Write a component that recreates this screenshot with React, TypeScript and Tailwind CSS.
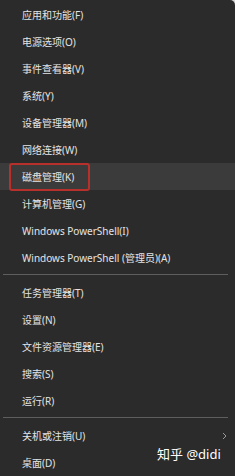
import React from 'react';

type Item = { label: string; active?: boolean; submenu?: boolean } | 'sep';

const items: Item[] = [
  { label: '应用和功能(F)' },
  { label: '电源选项(O)' },
  { label: '事件查看器(V)' },
  { label: '系统(Y)' },
  { label: '设备管理器(M)' },
  { label: '网络连接(W)' },
  { label: '磁盘管理(K)', active: true },
  { label: '计算机管理(G)' },
  { label: 'Windows PowerShell(I)' },
  { label: 'Windows PowerShell (管理员)(A)' },
  'sep',
  { label: '任务管理器(T)' },
  { label: '设置(N)' },
  { label: '文件资源管理器(E)' },
  { label: '搜索(S)' },
  { label: '运行(R)' },
  'sep',
  { label: '关机或注销(U)', submenu: true },
  { label: '桌面(D)' },
];

const App: React.FC = () => {
  return (
    <div className="w-[235px] h-[476px] bg-[#d8d8d8] overflow-hidden">
      <div
        className="relative w-full h-full bg-[#2b2b2b] rounded-tr-[5px] pt-[1px] text-[#e4e4e4] text-[10px]"
        style={{ fontFamily: '"Noto Sans", "Noto Sans CJK SC", sans-serif' }}
      >
        {items.map((item, idx) =>
          item === 'sep' ? (
            <div key={idx} className="h-[8px] pt-[3px] px-[3px]">
              <div className="w-[225px] h-px bg-[#5e5e5e]" />
            </div>
          ) : (
            <div
              key={idx}
              className={`relative h-[27px] flex items-center pl-[22px] ${item.active ? 'bg-[#3b3b3b]' : ''}`}
            >
              {item.active && (
                <div className="absolute left-[9px] top-0 w-[81px] h-[28px] border-2 border-[#b8302c] rounded-[3px]" />
              )}
              <span className="leading-none">{item.label}</span>
              {item.submenu && (
                <svg className="absolute right-[8px]" width="5" height="8" viewBox="0 0 5 8" fill="none">
                  <path d="M1 1l3 3-3 3" stroke="#9a9a9a" strokeWidth="1" />
                </svg>
              )}
            </div>
          )
        )}
        {/* 水印 */}
        <div className="absolute left-[157px] top-[448px] text-[13px] text-white leading-none">
          知乎 @didi
        </div>
      </div>
    </div>
  );
};

export default App;
